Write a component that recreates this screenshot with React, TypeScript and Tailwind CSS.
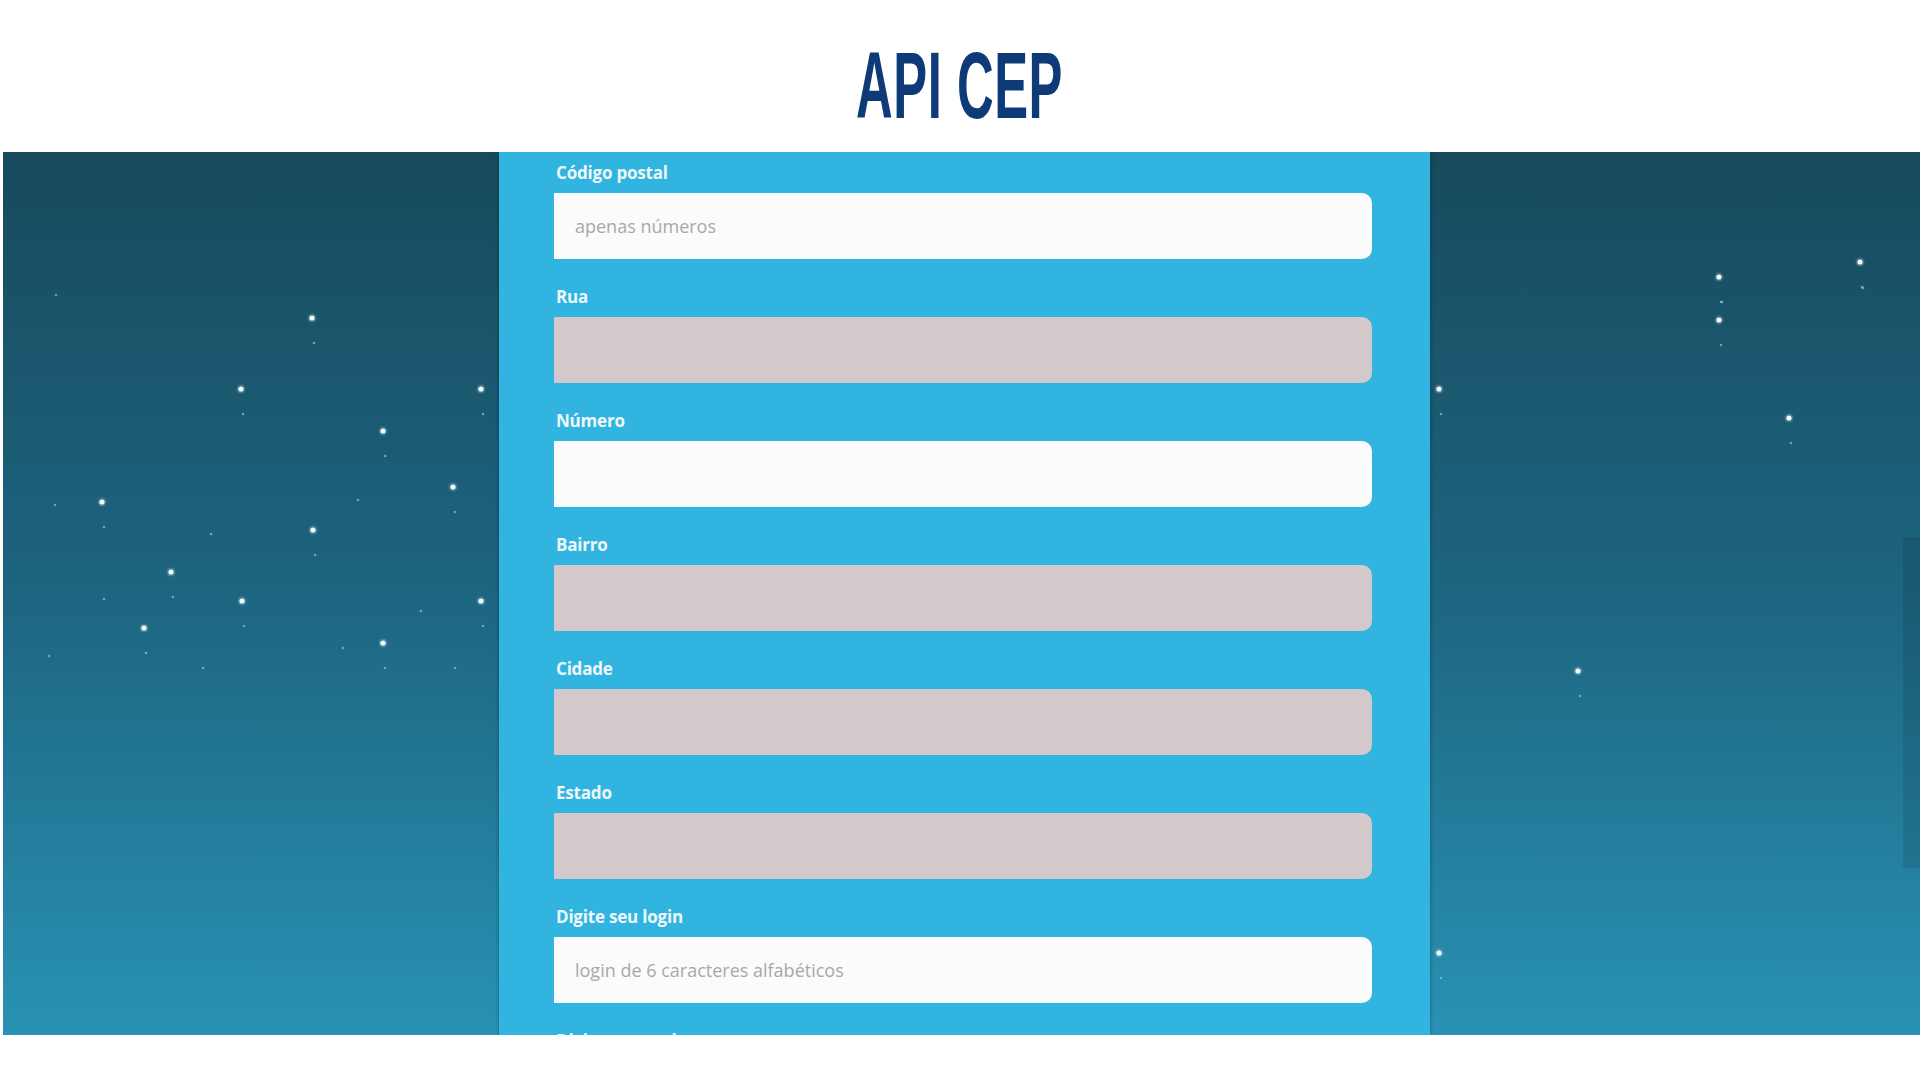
import React from "react"

const stars: [number, number][] = [
  [312, 318], [241, 389], [481, 389], [383, 431], [453, 487], [102, 502],
  [313, 530], [171, 572], [242, 601], [481, 601], [144, 628], [383, 643],
  [1719, 277], [1860, 262], [1719, 320], [1439, 389], [1789, 418],
  [1578, 671], [1439, 953],
]

const faint: [number, number][] = [
  [56, 295], [55, 505], [211, 534], [358, 500], [104, 599], [421, 611],
  [49, 656], [203, 668], [343, 648], [455, 668], [1863, 288], [1722, 302],
]

function Starfield() {
  return (
    <svg className="absolute inset-0 pointer-events-none" width="1917" height="883" viewBox="3 152 1917 883">
      {faint.map(([x, y], i) => (
        <circle key={"f" + i} cx={x} cy={y} r="1.3" fill="#9fd3e6" opacity="0.6" />
      ))}
      {stars.map(([x, y], i) => (
        <g key={"s" + i}>
          <circle cx={x} cy={y} r="4.5" fill="#ffffff" opacity="0.18" />
          <circle cx={x} cy={y} r="2.6" fill="#f4fbff" />
          <circle cx={x + 2} cy={y + 25} r="1.3" fill="#9fd3e6" opacity="0.6" />
        </g>
      ))}
    </svg>
  )
}

function Field({ label, placeholder, disabled }: { label: string; placeholder?: string; disabled?: boolean }) {
  return (
    <div className="flex flex-col">
      <label className="pl-[2px] text-[17px] leading-[24px] font-bold text-[#eef7fc] mb-[8px] tracking-[-0.2px]">{label}</label>
      <div
        className={
          "h-[66px] rounded-r-[10px] flex items-center pl-[21px] text-[18px] text-[#a8a8a8] " +
          (disabled ? "bg-[#d3c9ca]" : "bg-[#fbfbfb]")
        }
      >
        {placeholder}
      </div>
    </div>
  )
}

export default function App() {
  return (
    <div className="w-full h-[1080px] bg-white flex flex-col" style={{ fontFamily: '"Open Sans", "Liberation Sans", sans-serif' }}>
      <header className="h-[152px] flex items-center justify-center">
        <h1
          className="inline-block scale-x-[0.54] text-[94px] leading-none font-bold text-[#0f3a78] mt-[20px] tracking-[1px]"
          style={{ fontFamily: '"Liberation Sans", Arial, sans-serif' }}
        >
          API CEP
        </h1>
      </header>

      <main className="relative ml-[3px] h-[883px] overflow-hidden bg-gradient-to-b from-[#174a5d] via-[#1d6580] to-[#2992b4]">
        <Starfield />
        <div className="absolute right-0 top-[385px] w-[17px] h-[331px] bg-[#000000]/10" />
        <div className="relative ml-[496px] w-[931px] h-full bg-[#32b4e0] shadow-[0_0_4px_rgba(0,0,0,0.35)] pl-[55px] pr-[58px] pt-[9px] flex flex-col gap-[26px]">
          <Field label="Código postal" placeholder="apenas números" />
          <Field label="Rua" disabled />
          <Field label="Número" />
          <Field label="Bairro" disabled />
          <Field label="Cidade" disabled />
          <Field label="Estado" disabled />
          <Field label="Digite seu login" placeholder="login de 6 caracteres alfabéticos" />
          <Field label="Digite sua senha" placeholder="senha" />
        </div>
      </main>
    </div>
  )
}
